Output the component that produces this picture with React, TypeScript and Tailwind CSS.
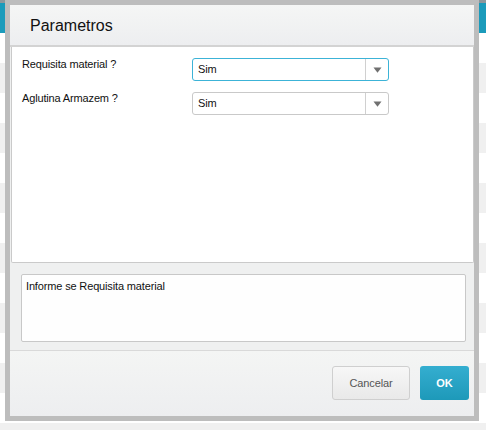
import React from "react";

const rows = Array.from({ length: 14 }, (_, i) => i);

function Select({ focused }: { focused?: boolean }) {
  return (
    <div
      className={`flex h-[23px] w-[197px] items-stretch rounded-[3px] border bg-white ${
        focused ? "border-[#3cb3d7]" : "border-[#c9c9c9]"
      }`}
    >
      <div className="flex flex-1 items-center pl-[5px] text-[11px] tracking-[-0.15px] text-[#111]">Sim</div>
      <div className="flex w-[23px] items-center justify-center border-l border-[#d0d0d0]">
        <svg width="9" height="6" viewBox="0 0 9 6">
          <path d="M0.5 0.5 L8.5 0.5 L4.5 5.8 Z" fill="#707070" />
        </svg>
      </div>
    </div>
  );
}

export default function App() {
  return (
    <div
      className="relative h-[430px] w-[486px] overflow-hidden bg-white"
      style={{ fontFamily: '"Liberation Sans", Arial, sans-serif' }}
    >
      {/* background page */}
      <div className="flex flex-col">
        <div className="h-[3px] bg-[#8e979c]" />
        <div className="h-[30px] bg-[#1b9bbb]" />
        {rows.map((i) => (
          <div key={i} className={`h-[30px] ${i % 2 === 1 ? "bg-[#f0f0f0]" : "bg-white"}`} />
        ))}
      </div>

      {/* dialog */}
      <div className="absolute left-[5px] top-0 flex h-[421px] w-[474px] flex-col border-[5px] border-[#bdbdbd] bg-[#eff0f0]">
        <div className="flex h-[40px] items-center bg-gradient-to-b from-[#f5f6f5] to-[#edeef0] pl-[20px] pt-[1px] text-[16px] text-[#111]">
          Parametros
        </div>
        <div className="h-[2px] bg-[#d3d3d3]" />
        <div className="ml-[1px] flex h-[216px] flex-col gap-[11px] rounded-b-[2px] border-x border-b border-[#cacaca] bg-white pl-[10px] pt-[11px]">
          <div className="flex items-start">
            <div className="w-[170px] text-[11px] leading-[13px] tracking-[-0.15px] text-[#111]">Requisita material ?</div>
            <Select focused />
          </div>
          <div className="flex items-start">
            <div className="w-[170px] text-[11px] leading-[13px] tracking-[-0.15px] text-[#111]">Aglutina Armazem ?</div>
            <Select />
          </div>
        </div>
        <div className="flex h-[87px] flex-col pl-[11px] pr-[8px] pt-[11px]">
          <div className="h-[68px] rounded-[2px] border border-[#c8c8c8] bg-[#fefefe] pl-[4px] pt-[5px] text-[11px] leading-[13px] tracking-[-0.15px] text-[#111]">
            Informe se Requisita material
          </div>
        </div>
        <div className="flex flex-1 items-start justify-end gap-[10px] border-t border-[#d9d9d9] bg-gradient-to-b from-[#f4f5f4] to-[#edeef0] pr-[5px] pt-[15px]">
          <button className="h-[34px] w-[78px] rounded-[3px] border border-[#cfcfcf] bg-gradient-to-b from-[#f7f7f7] to-[#e9e9e9] text-[11px] tracking-[-0.15px] text-[#555]">
            Cancelar
          </button>
          <button className="h-[34px] w-[49px] rounded-[3px] bg-gradient-to-b from-[#34aed0] to-[#1d99b9] text-[11px] font-bold text-white">
            OK
          </button>
        </div>
      </div>
    </div>
  );
}
